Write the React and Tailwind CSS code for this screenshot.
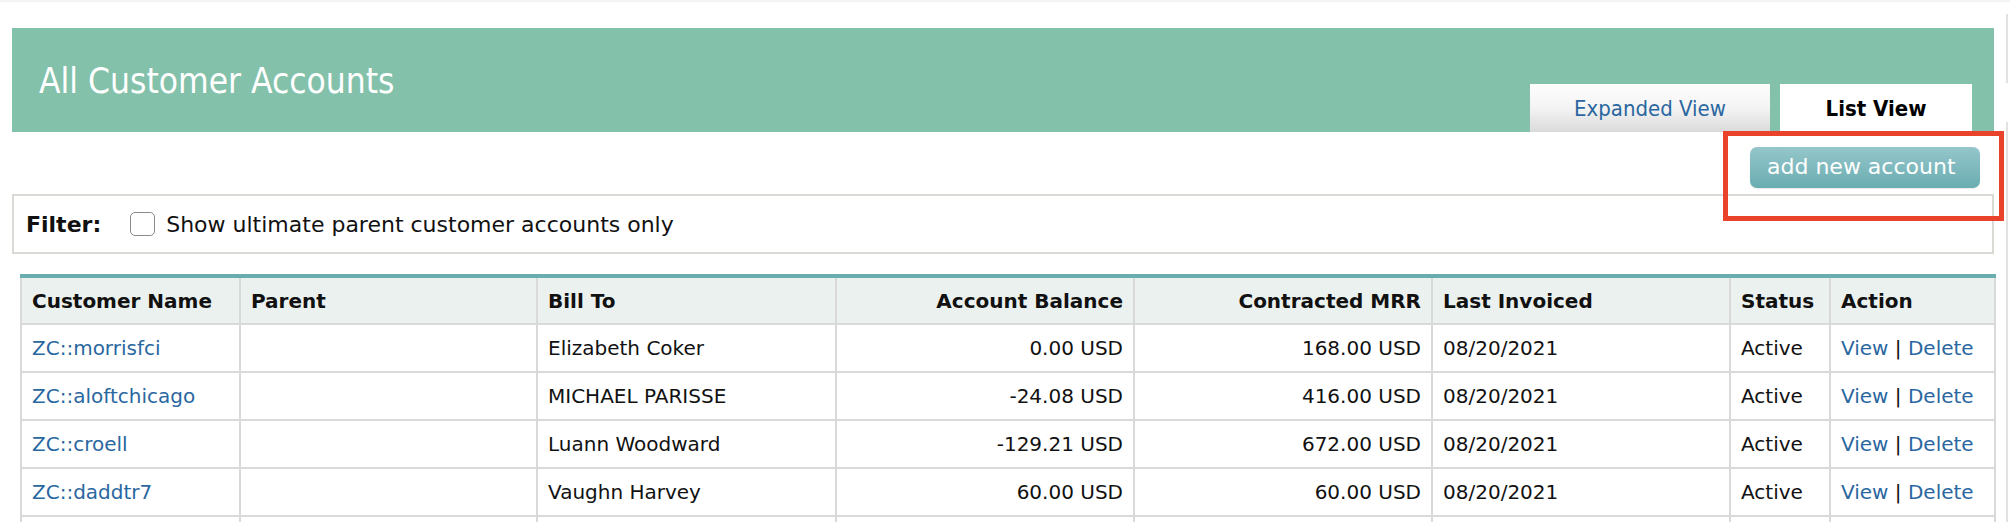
import React from 'react';

const ROWS = [
  { name: 'ZC::morrisfci',    billTo: 'Elizabeth Coker', balance: '0.00 USD',    mrr: '168.00 USD', invoiced: '08/20/2021', status: 'Active' },
  { name: 'ZC::aloftchicago', billTo: 'MICHAEL PARISSE', balance: '-24.08 USD',  mrr: '416.00 USD', invoiced: '08/20/2021', status: 'Active' },
  { name: 'ZC::croell',       billTo: 'Luann Woodward',  balance: '-129.21 USD', mrr: '672.00 USD', invoiced: '08/20/2021', status: 'Active' },
  { name: 'ZC::daddtr7',      billTo: 'Vaughn Harvey',   balance: '60.00 USD',   mrr: '60.00 USD',  invoiced: '08/20/2021', status: 'Active' },
];

const th = 'h-[48px] border-2 border-[#d9d9d9] border-t-4 border-t-[#69adae] bg-[#ebf1ef] px-[10px] text-[20px] font-bold text-[#111]';
const td = 'h-[48px] border-2 border-[#d9d9d9] px-[10px] text-[20px] text-[#111] whitespace-nowrap';

export default function App() {
  return (
    <div
      className="relative flex w-[2010px] h-[522px] overflow-hidden bg-white border-t-2 border-[#f4f4f4]"
      style={{ fontFamily: '"DejaVu Sans", Verdana, sans-serif' }}
    >
      <div className="w-[2006px] pl-[12px]">
        <div className="w-[1982px]">
          {/* Page header */}
          <div className="mt-[26px] h-[104px] bg-[#83c1ab] flex justify-between">
            <h1
              className="pl-[27px] pt-[36px] text-[35px] leading-none text-white font-normal"
              style={{ fontFamily: '"DejaVu Sans Condensed", "DejaVu Sans", sans-serif', fontStretch: 'condensed' }}
            >
              All Customer Accounts
            </h1>
            <div
              className="flex items-end gap-[10px] pr-[22px]"
              style={{ fontFamily: '"DejaVu Sans Condensed", "DejaVu Sans", sans-serif', fontStretch: 'condensed' }}
            >
              <div className="w-[240px] h-[48px] flex items-center justify-center bg-gradient-to-b from-[#fdfdfd] via-[#f4f4f4] to-[#dadada] text-[22px] text-[#2a67a0]">
                Expanded View
              </div>
              <div className="w-[192px] h-[48px] flex items-center justify-center bg-white text-[22px] font-bold text-black">
                List View
              </div>
            </div>
          </div>

          {/* Actions */}
          <div className="flex justify-end pt-[15px] pr-[14px]">
            <button className="w-[230px] h-[41px] pl-[17px] pb-[3px] text-left rounded-[7px] bg-gradient-to-b from-[#95c6cb] to-[#69adb1] text-[22px] text-white shadow-[0_1px_1px_rgba(0,0,0,0.08)]">
              add new account
            </button>
          </div>

          {/* Filter */}
          <div className="mt-[6px] h-[60px] border-2 border-[#dadad4] flex items-center pl-[12px]">
            <span className="text-[22px] font-bold text-[#111]">Filter:</span>
            <label className="flex items-center ml-[29px] text-[22px] text-[#111]">
              <span className="w-[25px] h-[24px] rounded-[5px] border-[1.5px] border-[#8a8a8a] bg-white"></span>
              <span className="ml-[11px]">Show ultimate parent customer accounts only</span>
            </label>
          </div>

          {/* Accounts table */}
          <div className="pl-[8px] pt-[20px]">
            <table className="table-fixed border-collapse w-[1974px]">
              <colgroup>
                <col className="w-[219px]" />
                <col className="w-[297px]" />
                <col className="w-[299px]" />
                <col className="w-[298px]" />
                <col className="w-[298px]" />
                <col className="w-[298px]" />
                <col className="w-[100px]" />
                <col className="w-[165px]" />
              </colgroup>
              <thead>
                <tr>
                  <th className={`${th} text-left`}>Customer Name</th>
                  <th className={`${th} text-left`}>Parent</th>
                  <th className={`${th} text-left`}>Bill To</th>
                  <th className={`${th} text-right`}>Account Balance</th>
                  <th className={`${th} text-right`}>Contracted MRR</th>
                  <th className={`${th} text-left`}>Last Invoiced</th>
                  <th className={`${th} text-left`}>Status</th>
                  <th className={`${th} text-left`}>Action</th>
                </tr>
              </thead>
              <tbody>
                {ROWS.map((r) => (
                  <tr key={r.name}>
                    <td className={td}><a className="text-[#2a67a0]">{r.name}</a></td>
                    <td className={td}></td>
                    <td className={td}>{r.billTo}</td>
                    <td className={`${td} text-right`}>{r.balance}</td>
                    <td className={`${td} text-right`}>{r.mrr}</td>
                    <td className={td}>{r.invoiced}</td>
                    <td className={td}>{r.status}</td>
                    <td className={td}>
                      <a className="text-[#2a67a0]">View</a> | <a className="text-[#2a67a0]">Delete</a>
                    </td>
                  </tr>
                ))}
                <tr>
                  <td className={td}></td>
                  <td className={td}></td>
                  <td className={td}></td>
                  <td className={td}></td>
                  <td className={td}></td>
                  <td className={td}></td>
                  <td className={td}></td>
                  <td className={td}></td>
                </tr>
              </tbody>
            </table>
          </div>
        </div>
      </div>

      {/* window edge */}
      <div className="w-[2px] flex flex-col">
        <div className="mt-[12px] h-[69px] bg-[#e2e2e2]"></div>
        <div className="mt-[39px] flex-1 bg-[#e2e2e2]"></div>
      </div>

      {/* highlight annotation */}
      <div className="absolute left-[1723px] top-[129px] w-[281px] h-[90px] border-[5px] border-[#e9442b]"></div>
    </div>
  );
}
